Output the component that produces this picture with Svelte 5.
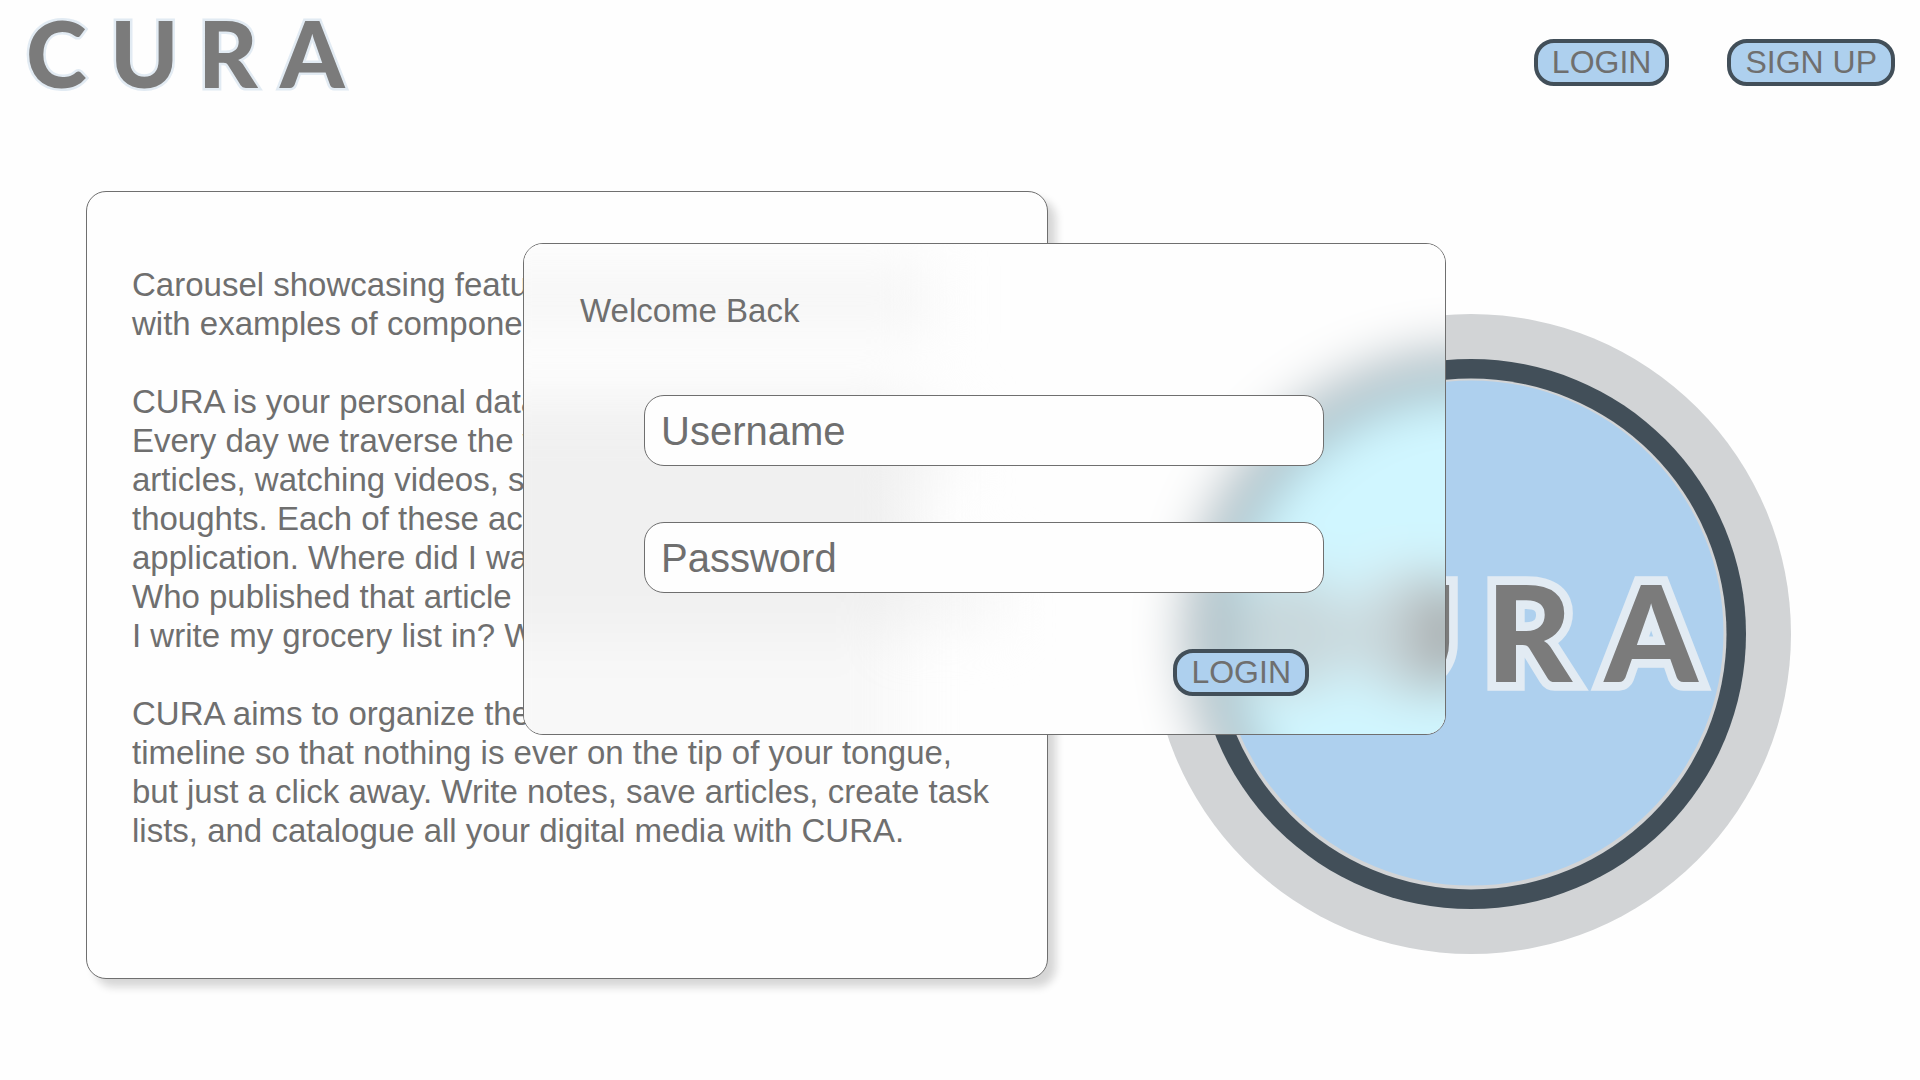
<script lang="ts">
  let username = $state('');
  let password = $state('');

  const blocks = [
    ['Carousel showcasing features', 'with examples of components'],
    [
      'CURA is your personal data',
      'Every day we traverse the web',
      'articles, watching videos, so',
      'thoughts. Each of these acts',
      'application. Where did I wait',
      'Who published that article',
      'I write my grocery list in? We',
    ],
    [
      'CURA aims to organize the',
      'timeline so that nothing is ever on the tip of your tongue,',
      'but just a click away. Write notes, save articles, create task',
      'lists, and catalogue all your digital media with CURA.',
    ],
  ];
</script>

{#snippet wordmark(outline: number)}
  <text class="wordmark" y="71" x="2 86 174 256" stroke-width={outline}>CURA</text>
{/snippet}

<div class="page">
  <header>
    <a class="brand" href="#home" aria-label="CURA">
      <svg width="326" height="80" viewBox="0 0 326 80">
        {@render wordmark(5)}
      </svg>
    </a>
    <nav>
      <button class="pill" type="button">LOGIN</button>
      <button class="pill" type="button">SIGN UP</button>
    </nav>
  </header>

  <main>
    <section class="card">
      {#each blocks as block}
        <p>{block.join('\n')}</p>
      {/each}
    </section>

    <svg class="emblem" viewBox="0 0 640 640" role="img" aria-label="CURA emblem">
      <circle cx="320" cy="320" r="320" fill="#d2d4d6" />
      <circle cx="320" cy="320" r="275" fill="#424f59" />
      <circle cx="320" cy="320" r="255.5" fill="#d2d4d6" />
      <circle cx="320" cy="319" r="252.5" fill="#aed0ee" />
      <g transform="translate(84 265.5) scale(1.443)">
        {@render wordmark(12)}
      </g>
    </svg>
  </main>

  <div class="overlay">
    <form class="dialog" onsubmit={(event) => event.preventDefault()}>
      <!-- Frosted glass: soft, brightened shapes of the card text and the emblem -->
      <svg class="glass" viewBox="0 0 923 492" preserveAspectRatio="xMaxYMin slice" aria-hidden="true">
        <defs>
          <filter id="frost" filterUnits="userSpaceOnUse" x="-200" y="-200" width="1400" height="1000" color-interpolation-filters="sRGB">
            <feGaussianBlur stdDeviation="28" />
          </filter>
        </defs>
        <g filter="url(#frost)">
          <rect x="-300" y="-300" width="1700" height="1300" fill="#fefefe" />
          <circle cx="948" cy="391" r="275" fill="#65747e" />
          <circle cx="948" cy="391" r="254" fill="#d0f6ff" />
          <g fill="none" stroke="#e2f0f5" stroke-width="40">
            <circle cx="767" cy="391" r="38" />
            <rect x="854" y="343" width="56" height="85" rx="28" />
          </g>
          <g fill="none" stroke="#b4b8b9" stroke-width="23">
            <circle cx="767" cy="391" r="38" />
            <rect x="854" y="355" width="56" height="73" rx="28" />
          </g>
          <rect x="900" y="343" width="54" height="96" fill="#a0a0a0" />
        </g>
        <g class="shade" filter="url(#frost)">
          <rect x="-60" y="22" width="470" height="68" fill="#f7f7f7" />
          <rect x="-60" y="155" width="450" height="235" fill="#f1f1f1" />
          <rect x="390" y="175" width="50" height="60" fill="#f7f7f7" />
          <rect x="390" y="320" width="90" height="60" fill="#f6f6f6" />
          <rect x="-60" y="390" width="440" height="200" fill="#f9f9f9" />
        </g>
      </svg>

      <h1>Welcome Back</h1>
      <input type="text" placeholder="Username" aria-label="Username" bind:value={username} />
      <input type="password" placeholder="Password" aria-label="Password" bind:value={password} />
      <button class="pill" type="submit">LOGIN</button>
    </form>
  </div>
</div>

<style>
  :global(body) {
    margin: 0;
    background: #fefefe;
  }

  .page {
    position: relative;
    min-height: 100vh;
    color: #6f6f6f;
    font-family: 'Liberation Sans', Arial, sans-serif;
    font-size: 33px;
    line-height: 39px;
  }

  header {
    display: flex;
    justify-content: space-between;
    align-items: flex-start;
    padding: 17px 25px 0 24px;
  }

  .brand svg {
    display: block;
    overflow: visible;
  }

  .wordmark {
    font-family: Lato, sans-serif;
    font-size: 92px;
    font-weight: 900;
    fill: #7b7b7b;
    stroke: #e2ebf3;
    paint-order: stroke;
  }

  nav {
    display: flex;
    gap: 58px;
    padding-top: 22px;
  }

  .pill {
    box-sizing: border-box;
    height: 47px;
    padding: 0 14px;
    border: 4px solid #424f59;
    border-radius: 20px;
    background: #aed0ee;
    color: #6f6f6f;
    font: inherit;
    font-size: 32px;
    cursor: pointer;
  }

  main {
    display: grid;
    grid-template-columns: 962fr 846fr;
    align-items: end;
    padding: 94px 26px 40px 86px;
  }

  .card {
    box-sizing: border-box;
    padding: 73px 30px 128px 45px;
    border: 1px solid #6f6f6f;
    border-radius: 20px;
    background: #fefefe;
    box-shadow: 8px 8px 8px #d6d6d6;
  }

  p {
    margin: 0;
    white-space: pre-line;
  }

  p + p {
    margin-top: 39px;
  }

  .emblem {
    justify-self: center;
    width: 640px;
    max-width: 100%;
    margin-bottom: 25px;
  }

  .overlay {
    position: absolute;
    inset: 0;
    display: flex;
    justify-content: center;
    align-items: flex-start;
    padding: 243px 0 0 49px;
    pointer-events: none;
  }

  .dialog {
    position: relative;
    isolation: isolate;
    overflow: hidden;
    box-sizing: border-box;
    display: flex;
    flex-direction: column;
    width: 923px;
    max-width: 100%;
    padding: 47px 121px 38px 120px;
    border: 1px solid #6f6f6f;
    border-radius: 20px;
    background: #fefefe;
    pointer-events: auto;
  }

  .glass {
    position: absolute;
    inset: 0;
    z-index: -1;
    width: 100%;
    height: 100%;
  }

  .shade {
    mix-blend-mode: multiply;
  }

  h1 {
    margin: 0 0 65px -64px;
    font-size: 33px;
    font-weight: 400;
    line-height: 39px;
  }

  input {
    box-sizing: border-box;
    height: 71px;
    margin: 0 0 56px;
    padding: 2px 16px 0;
    border: 1px solid #6f6f6f;
    border-radius: 20px;
    background: #fefefe;
    color: #6f6f6f;
    font: inherit;
    font-size: 40px;
  }

  input::placeholder {
    color: #6f6f6f;
    opacity: 1;
  }

  .dialog .pill {
    align-self: flex-end;
    margin-right: 15px;
  }
</style>
